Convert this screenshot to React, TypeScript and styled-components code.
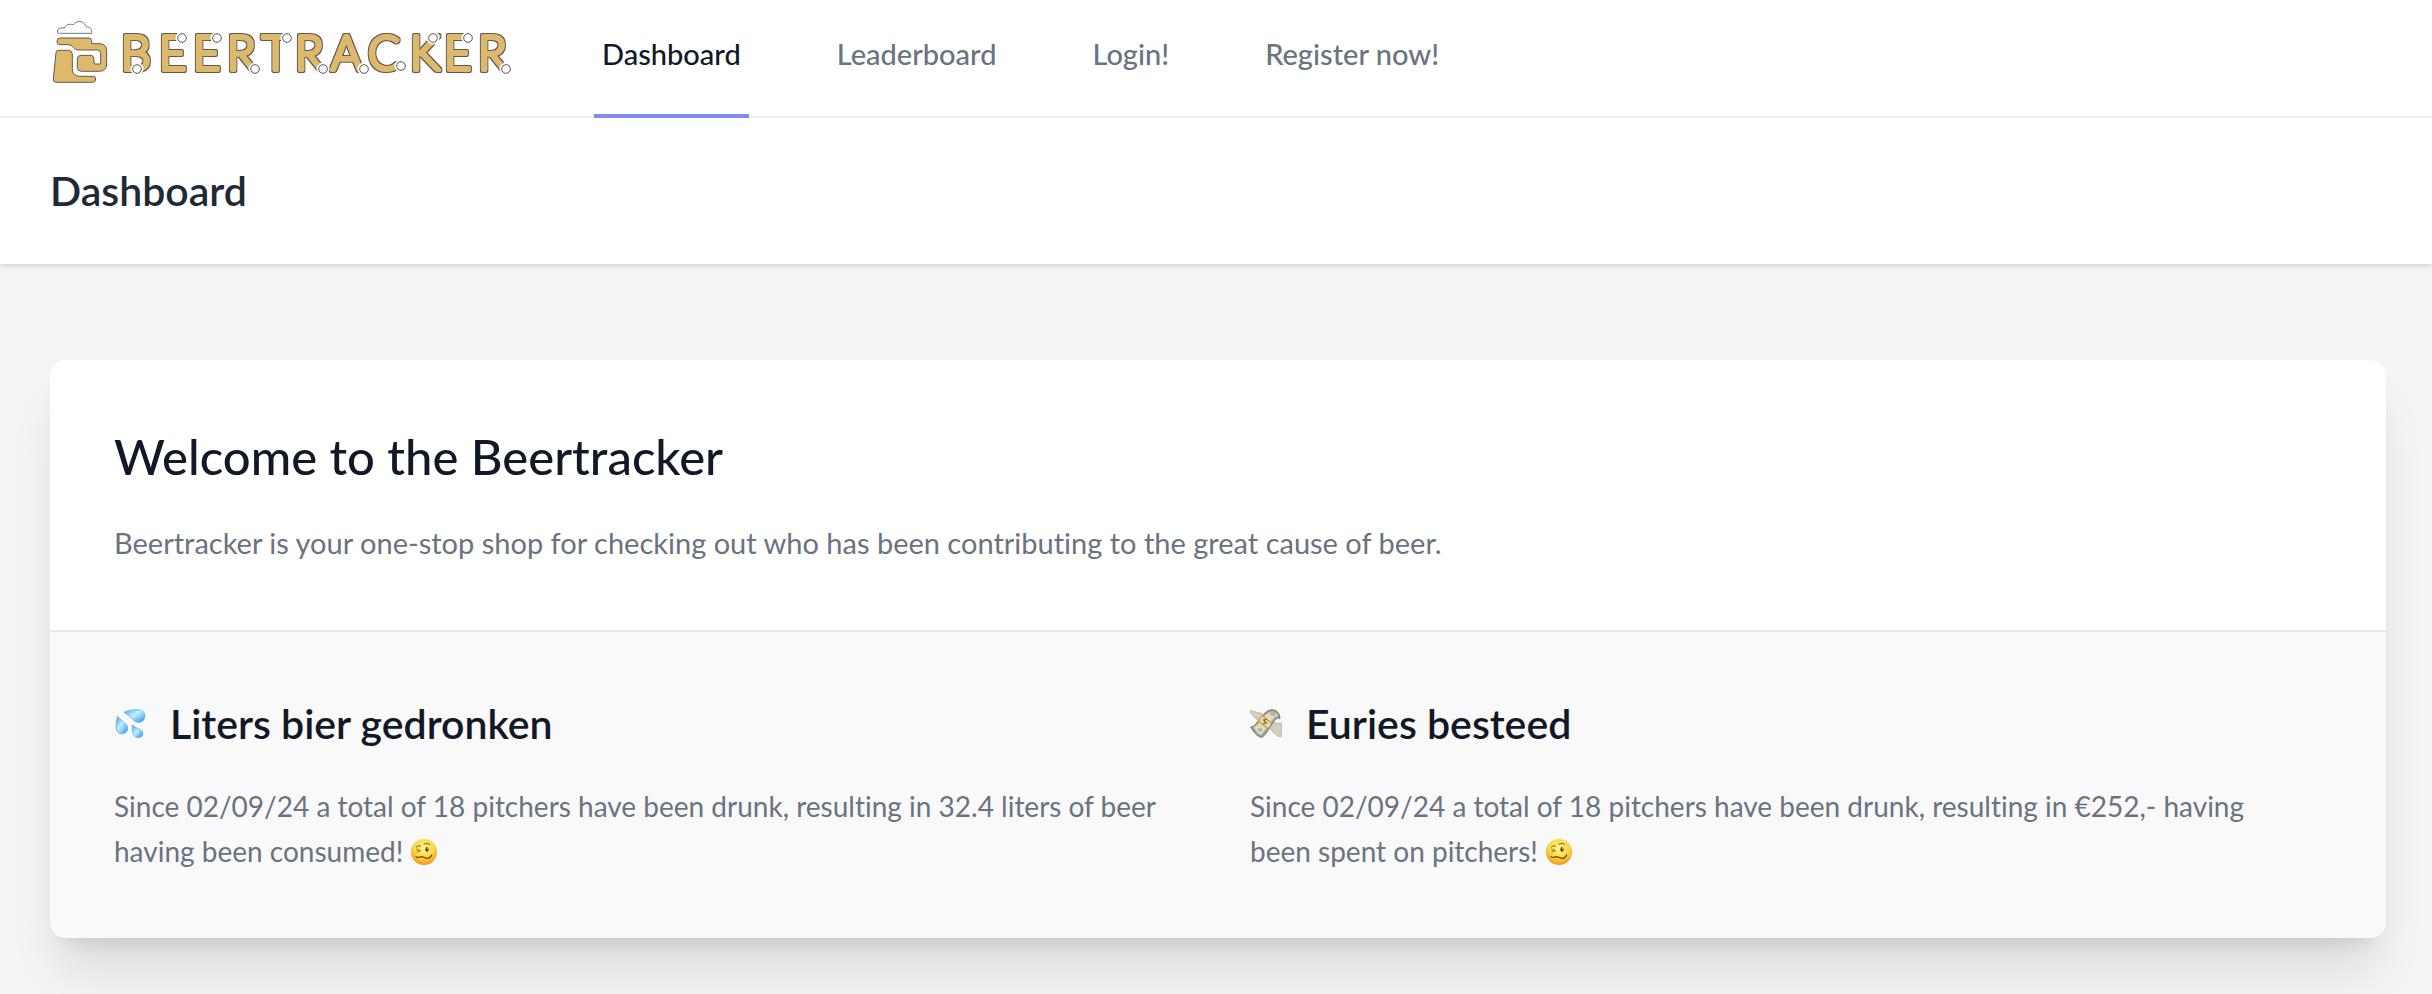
import React from "react";
import styled, { createGlobalStyle } from "styled-components";

const GlobalStyle = createGlobalStyle`
  *, *::before, *::after { box-sizing: border-box; }
  body {
    margin: 0;
    background: #f3f4f6;
    font-family: Lato, "Open Sans", sans-serif;
    font-size: 29px;
    line-height: 46px;
    font-variant-ligatures: none;
    color: #6b7280;
    -webkit-font-smoothing: antialiased;
  }
  h1, h2, h3, p { margin: 0; }
`;

const NavBar = styled.nav`
  display: flex;
  gap: 80px;
  height: 118px;
  padding: 0 46px 0 50px;
  background: #fff;
  border-bottom: 2px solid #f3f4f6;
`;

const LogoLink = styled.a`
  display: flex;
  flex: none;
  align-items: flex-start;
  padding-top: 10px;
`;

const NavLinks = styled.div`
  display: flex;
  gap: 80px;
  height: 118px;
`;

const NavLink = styled.a<{ $active?: boolean }>`
  display: flex;
  align-items: center;
  padding: 0 8px 6px;
  border-bottom: 4px solid ${(p) => (p.$active ? "#818cf8" : "transparent")};
  color: ${(p) => (p.$active ? "#111827" : "#6b7280")};
  font-weight: 500;
  text-decoration: none;
  white-space: nowrap;
`;

const PageHeader = styled.header`
  padding: 48px 46px 48px 50px;
  background: #fff;
  box-shadow: 0 2px 6px rgba(0, 0, 0, 0.1), 0 2px 4px -2px rgba(0, 0, 0, 0.1);
`;

const PageTitle = styled.h1`
  font-size: 41px;
  line-height: 50px;
  font-weight: 600;
  color: #1f2937;
`;

const Main = styled.main`
  padding: 96px 46px 96px 50px;
`;

const Card = styled.section`
  overflow: hidden;
  border-radius: 16px;
  background: #fff;
  box-shadow: 0 40px 50px -10px rgba(0, 0, 0, 0.1), 0 16px 20px -12px rgba(0, 0, 0, 0.1);
`;

const Intro = styled.div`
  display: flex;
  flex-direction: column;
  gap: 32px;
  padding: 64px;
  border-bottom: 2px solid #e5e7eb;
`;

const IntroTitle = styled.h2`
  font-size: 49px;
  line-height: 64px;
  font-weight: 500;
  color: #111827;
`;

const Stats = styled.div`
  display: grid;
  grid-template-columns: 1fr 1fr;
  gap: 64px;
  padding: 64px;
  background: #f9f9f9;
`;

const Stat = styled.article`
  display: flex;
  flex-direction: column;
  gap: 32px;
`;

const StatHeading = styled.div`
  display: flex;
  align-items: center;
  gap: 24px;
`;

const StatTitle = styled.h3`
  font-size: 41px;
  line-height: 56px;
  font-weight: 600;
  color: #111827;
`;

const StatText = styled.p`
  padding-right: 16px;
  font-size: 28px;
  line-height: 45px;
`;

const HeadingIcon = styled.svg`
  flex: none;
  width: 32px;
  height: 32px;
`;

const InlineEmoji = styled.svg`
  width: 28px;
  height: 28px;
  vertical-align: -4px;
`;

const Wordmark = styled.text`
  font-family: Lato, sans-serif;
  font-size: 47px;
  font-weight: 300;
`;

const BUBBLES = [
  [137, 69], [182, 38], [217, 38], [255, 69], [287, 38], [323, 69],
  [364, 69], [401, 66], [433, 38], [468, 38], [506, 69],
];

function Logo() {
  return (
    <svg width="464" height="80" viewBox="50 10 464 80" role="img" aria-label="Beertracker">
      <defs>
        <filter id="outline" x="-5%" y="-20%" width="110%" height="140%">
          <feMorphology in="SourceAlpha" operator="dilate" radius="1" result="grown" />
          <feFlood floodColor="#5c5a56" />
          <feComposite in2="grown" operator="in" />
          <feMerge>
            <feMergeNode />
            <feMergeNode in="SourceGraphic" />
          </feMerge>
        </filter>
      </defs>
      <g transform="translate(40 10) scale(0.3333)" stroke="#5c5a57" strokeWidth="3" fill="#deb96c">
        <path fill="#fff" stroke="#77777a" d="M58 70C48 69 51 55 63 54c4-1 8 0 11 0 2-10 14-13 27-10 5-13 30-14 35 2 1 4 3 5 7 5 11 2 13 11 12 19z" />
        <path d="M60 84H147Q154 84 155 92V101H178Q200 101 200 122V162Q200 184 178 184H124Q112 184 112 172V147Q112 136 123 136H153Q160 136 161 144L163 162H182V130Q182 120 172 120H114Q105 119 100 112Q94 104 84 104H60Q51 104 51 94Q51 84 60 84Z" />
        <path d="M55 121H85Q97 121 97 133V176Q97 199 120 199H160Q167 199 167 207Q167 217 158 217H48Q39 217 40 207L48 128Q49 121 55 121Z" />
      </g>
      <Wordmark
        x="121 159 193 227 262 295 331 368 410 444 478"
        y="70"
        fill="#deb96c"
        stroke="#deb96c"
        strokeWidth="4"
        strokeLinejoin="round"
        filter="url(#outline)"
      >
        BEERTRACKER
      </Wordmark>
      {BUBBLES.map(([cx, cy]) => (
        <g key={cx} fill="#fff">
          <circle cx={cx} cy={cy} r="6.5" />
          <circle cx={cx} cy={cy} r="4.3" stroke="#444" strokeWidth="0.9" />
        </g>
      ))}
    </svg>
  );
}

function SweatDrops() {
  return (
    <HeadingIcon viewBox="42 56 96 96" role="img" aria-label="Sweat droplets">
      <defs>
        <linearGradient id="water" x1="0" y1="0" x2="1" y2="1">
          <stop offset="0" stopColor="#3f9fe8" />
          <stop offset="0.45" stopColor="#c4efff" />
          <stop offset="1" stopColor="#2a8fe6" />
        </linearGradient>
      </defs>
      <g fill="url(#water)" stroke="#4aa5ea" strokeWidth="2">
        <path d="M72 69C88 61 112 59 124 63C137 68 138 86 128 95C118 102 106 99 99 91C92 83 82 76 72 69Z" />
        <path d="M53 81C49 94 47 108 49 119C52 136 74 138 82 124C86 112 78 103 70 97C63 92 58 87 53 81Z" />
        <path d="M97 107C97 116 97 130 102 138C108 148 124 147 128 137C130 126 124 121 115 118C108 115 102 112 97 107Z" />
      </g>
    </HeadingIcon>
  );
}

function FlyingMoney() {
  return (
    <HeadingIcon viewBox="30 52 96 96" role="img" aria-label="Money with wings">
      <g fill="#d2cfc1" stroke="#a9a596" strokeWidth="2">
        <path d="M31 60C42 63 55 65 66 69L73 78L60 89C52 88 48 86 48 82C41 81 39 78 40 74C34 72 31 67 31 60Z" />
        <path d="M88 106L102 96C111 96 119 100 124 97C127 109 126 125 124 138C116 139 110 136 107 129C100 128 96 124 97 119C92 118 88 113 88 106Z" />
      </g>
      <path d="M32 109C43 111 52 92 67 76C76 63 90 55 102 58C113 61 119 70 120 83C110 79 103 91 95 101C84 118 76 136 64 140C51 137 41 124 32 109Z" fill="#9fa292" stroke="#6f7166" strokeWidth="3" />
      <path d="M41 110C54 106 65 85 79 71C91 60 107 60 115 75C102 77 93 93 83 106C75 118 69 129 61 133C52 129 46 119 41 110Z" fill="#dcdccb" />
      <ellipse cx="99" cy="69" rx="9" ry="6" fill="#aab69b" />
      <ellipse cx="60" cy="117" rx="8" ry="6" fill="#b3bba8" />
      <path d="M57 89L67 77L94 99L85 111Z" fill="#e9dfb9" />
      <path d="M55 91L84 113M67 75L95 98" stroke="#e9a820" strokeWidth="5" fill="none" />
      <path d="M69 99C75 101 79 97 74 93C69 87 78 83 81 89M69 86L82 100" fill="none" stroke="#45463b" strokeWidth="3" />
    </HeadingIcon>
  );
}

function WoozyFace() {
  return (
    <InlineEmoji viewBox="0 0 84 84" role="img" aria-label="Woozy face">
      <defs>
        <radialGradient id="skin" cx="0.5" cy="0.35" r="0.65">
          <stop offset="0" stopColor="#fff38a" />
          <stop offset="0.6" stopColor="#fdd544" />
          <stop offset="1" stopColor="#ef9416" />
        </radialGradient>
      </defs>
      <circle cx="42" cy="42" r="39" fill="url(#skin)" />
      <ellipse cx="51" cy="34" rx="5" ry="8" fill="#694013" />
      <circle cx="53" cy="30" r="2" fill="#fff" />
      <path d="M42 18Q52 13 59 19M19 27Q25 21 32 24M20 34L31 38L21 42" fill="none" stroke="#906020" strokeWidth="3" strokeLinecap="round" strokeLinejoin="round" />
      <path d="M18 56C24 63 31 53 39 57C48 61 58 66 65 51" fill="none" stroke="#754312" strokeWidth="4" strokeLinecap="round" />
    </InlineEmoji>
  );
}

export default function App() {
  return (
    <>
      <GlobalStyle />
      <NavBar aria-label="Main">
        <LogoLink href="#">
          <Logo />
        </LogoLink>
        <NavLinks>
          <NavLink href="#" $active aria-current="page">Dashboard</NavLink>
          <NavLink href="#leaderboard">Leaderboard</NavLink>
          <NavLink href="#login">Login!</NavLink>
          <NavLink href="#register">Register now!</NavLink>
        </NavLinks>
      </NavBar>
      <PageHeader>
        <PageTitle>Dashboard</PageTitle>
      </PageHeader>
      <Main>
        <Card>
          <Intro>
            <IntroTitle>Welcome to the Beertracker</IntroTitle>
            <p>
              Beertracker is your one-stop shop for checking out who has been contributing to the
              great cause of beer.
            </p>
          </Intro>
          <Stats>
            <Stat>
              <StatHeading>
                <SweatDrops />
                <StatTitle>Liters bier gedronken</StatTitle>
              </StatHeading>
              <StatText>
                Since 02/09/24 a total of 18 pitchers have been drunk, resulting in 32.4 liters of
                beer having been consumed! <WoozyFace />
              </StatText>
            </Stat>
            <Stat>
              <StatHeading>
                <FlyingMoney />
                <StatTitle>Euries besteed</StatTitle>
              </StatHeading>
              <StatText>
                Since 02/09/24 a total of 18 pitchers have been drunk, resulting in €252,- having
                been spent on pitchers! <WoozyFace />
              </StatText>
            </Stat>
          </Stats>
        </Card>
      </Main>
    </>
  );
}
